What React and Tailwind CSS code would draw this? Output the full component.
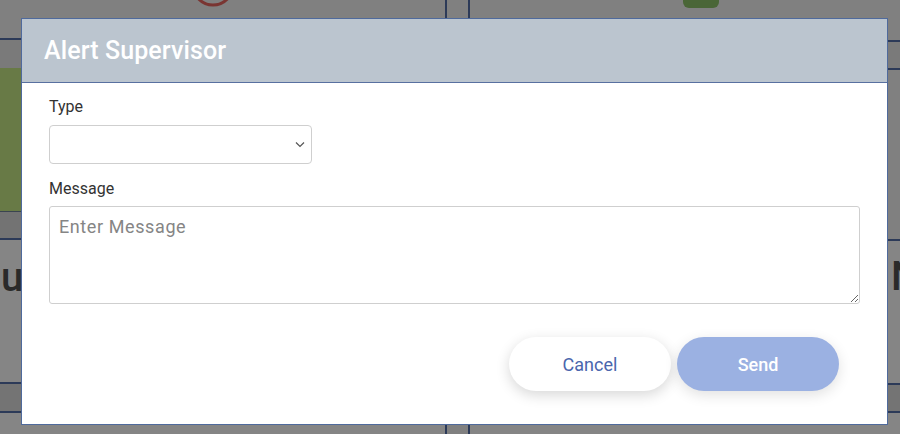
import React from "react";

const Line = () => <div className="h-[2px] bg-[#2c3a58]" />;

export default function App() {
  return (
    <div className="relative w-[900px] h-[434px] overflow-hidden bg-[#808080] font-['Roboto',sans-serif]">
      {/* Dimmed page behind the dialog */}
      <div className="flex h-full gap-[21px]">
        <div className="w-[447px] shrink-0 flex flex-col border-r-2 border-[#2c3a58]">
          <div className="relative h-[38px] overflow-hidden">
            <svg className="absolute left-[190px] top-[-34px]" width="46" height="42" viewBox="0 0 46 42">
              <circle cx="23" cy="19" r="20" fill="none" stroke="#7a3532" strokeWidth="3" />
            </svg>
          </div>
          <Line />
          <div className="h-[28px] bg-[#7a7a7a]" />
          <div className="h-[143px] bg-[#687a46]" />
          <div className="h-[1px] bg-[#3a4450]" />
          <div className="h-[26px] bg-[#737373]" />
          <Line />
          <div className="h-[142px] bg-[#858585] overflow-hidden">
            <div className="ml-[1px] mt-[14px] text-[40px] font-medium leading-[48px] text-[#2a2a2a]">u</div>
          </div>
          <Line />
          <div className="h-[27px] bg-[#747474]" />
          <Line />
          <div className="flex-1 bg-[#858585]" />
        </div>
        <div className="flex-1 min-w-0 flex flex-col border-l-2 border-[#2c3a58]">
          <div className="relative h-[40px] overflow-hidden">
            <div className="absolute left-[213px] top-[-10px] w-[36px] h-[18px] rounded-[6px] bg-[#4a6637]" />
          </div>
          <Line />
          <div className="h-[26px] bg-[#7a7a7a]" />
          <Line />
          <div className="h-[169px] bg-[#808080]" />
          <Line />
          <div className="h-[142px] bg-[#858585] overflow-hidden">
            <div className="ml-[421px] mt-[12px] text-[40px] font-medium leading-[48px] text-[#2a2a2a]">N</div>
          </div>
          <Line />
          <div className="h-[26px] bg-[#747474]" />
          <Line />
          <div className="flex-1 bg-[#858585]" />
        </div>
      </div>

      {/* Dialog */}
      <div className="absolute left-[21px] top-[18px] w-[867px] h-[407px] bg-white border border-[#4f6a9c] flex flex-col">
        <div className="h-[64px] bg-[#bbc5cf] border-b border-[#5870a0] px-[22px] flex items-center">
          <h2 className="text-[25px] font-medium text-white tracking-[0.1px]">Alert Supervisor</h2>
        </div>
        <div className="flex-1 px-[27px] pt-[14px] flex flex-col">
          <label className="text-[16px] leading-[20px] font-normal text-[#333]">Type</label>
          <div className="relative mt-[8px] w-[263px]">
            <select className="appearance-none w-full h-[39px] rounded-[4px] border border-[#cfcfcf] bg-white outline-none" />
            <svg className="absolute right-[7px] top-[16px]" width="10" height="7" viewBox="0 0 10 7">
              <path d="M1 1.5 L5 5.5 L9 1.5" fill="none" stroke="#555" strokeWidth="1.2" />
            </svg>
          </div>
          <label className="mt-[15px] text-[16px] leading-[20px] font-normal text-[#333]">Message</label>
          <textarea
            placeholder="Enter Message"
            className="mt-[7px] w-[811px] h-[98px] rounded-[3px] border border-[#cfcfcf] px-[9px] py-[8px] text-[18px] leading-[24px] tracking-[0.6px] text-[#333] placeholder:text-[#858585] outline-none"
          />
          <div className="mt-[33px] flex justify-end gap-[6px] pr-[21px]">
            <button className="w-[162px] h-[54px] rounded-full bg-white text-[18px] font-normal text-[#4a66ad] shadow-[0_4px_14px_rgba(0,0,0,0.16)]">
              Cancel
            </button>
            <button className="w-[162px] h-[54px] rounded-full bg-[#9bb1e2] text-[18px] font-medium text-white shadow-[0_4px_14px_rgba(0,0,0,0.12)]">
              Send
            </button>
          </div>
        </div>
      </div>
    </div>
  );
}
